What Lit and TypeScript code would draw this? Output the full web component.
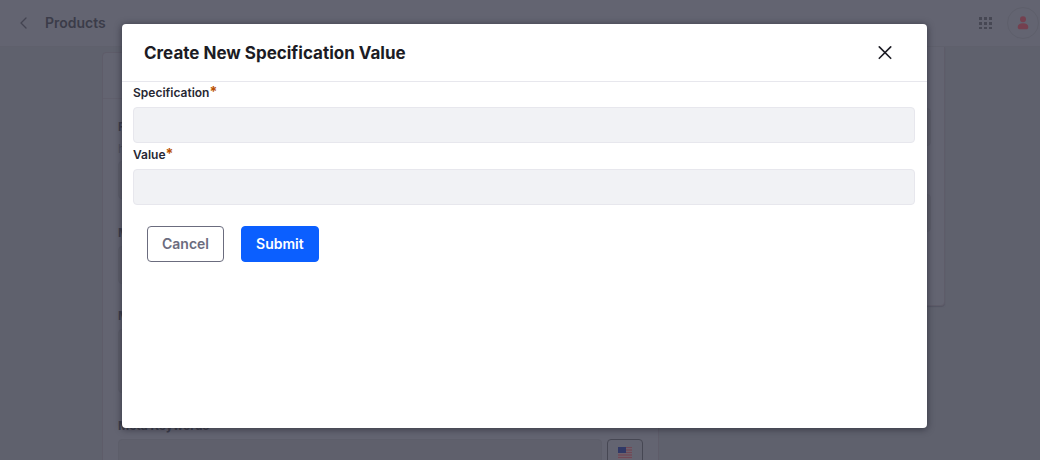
import { LitElement, html, css } from "lit";
import { customElement } from "lit/decorators.js";

@customElement("app-root")
export class AppRoot extends LitElement {
  static styles = css`
    :host {
      display: block;
      font-family: Inter, "Liberation Sans", sans-serif;
      color: #272833;
    }
    * {
      box-sizing: border-box;
    }
    .page {
      height: 100vh;
      overflow: hidden;
      background: #5f616d;
      color: #393a47;
      font-size: 12px;
      line-height: 20px;
    }
    .topbar {
      display: flex;
      align-items: center;
      height: 47px;
      padding: 0 1px 0 18px;
      background: #636471;
      border-bottom: 1px solid #5f606c;
    }
    .back {
      display: flex;
      width: 12px;
      margin-right: 15px;
      color: #434451;
    }
    .crumb {
      flex: 1;
      margin: 0;
      font-size: 14px;
      font-weight: 600;
      line-height: 20px;
      color: #3b3c49;
    }
    .apps {
      display: flex;
      padding: 0;
      border: 0;
      background: none;
      color: #464753;
      margin-right: 15px;
    }
    .avatar {
      display: flex;
      align-items: center;
      justify-content: center;
      width: 32px;
      height: 32px;
      padding: 0;
      border: 1px solid #5e5f6b;
      border-radius: 50%;
      background: none;
      color: #74404f;
    }
    .columns {
      display: grid;
      grid-template-columns: 2fr 1fr;
      align-items: start;
      gap: 8px;
      padding: 0 95px 0 102px;
    }
    .card {
      background: #636471;
      border: 1px solid #5e5c69;
      border-radius: 4px;
    }
    .seo {
      margin-top: 5px;
    }
    .card-head {
      height: 46px;
      border-bottom: 1px solid #605f6c;
    }
    .card-body {
      padding: 18px 15px;
    }
    .card label {
      display: block;
      font-weight: 700;
    }
    .hint {
      margin: 2px 0;
      color: #4d4e5a;
    }
    .box {
      display: block;
      width: 100%;
      height: 38px;
      border: 1px solid #5d5e6a;
      border-radius: 4px;
      background: #5f606c;
      resize: none;
    }
    .stack {
      display: grid;
      gap: 3px;
    }
    .friendly {
      margin-bottom: 24px;
    }
    .meta-title {
      margin-bottom: 22px;
    }
    .meta-description {
      margin-bottom: 23px;
    }
    .tall {
      height: 64px;
    }
    .localized {
      display: flex;
      gap: 5px;
    }
    .flag {
      flex: none;
      display: flex;
      align-items: center;
      justify-content: center;
      width: 36px;
      height: 28px;
      padding: 0;
      border: 1px solid #464753;
      border-radius: 4px;
      background: none;
    }
    .publish {
      border-top: 0;
      border-radius: 0 0 4px 4px;
      padding: 61px 13px 73px;
      box-shadow: 0 1px 1px #545562;
      display: grid;
      gap: 48px;
    }
    .overlay {
      position: absolute;
      inset: 0;
      display: flex;
      padding: 24px 113px 32px 122px;
    }
    .modal {
      flex: 1;
      background: #fff;
      border-radius: 4px;
      box-shadow: 0 1px 6px 1px rgba(39, 40, 51, 0.6);
    }
    .modal-head {
      display: flex;
      align-items: center;
      justify-content: space-between;
      height: 58px;
      padding: 0 26px 0 22px;
      border-bottom: 1px solid #e7e7ed;
    }
    .modal-head h1 {
      margin: 0;
      font-size: 17px;
      font-weight: 700;
      line-height: 24px;
      color: #1c1c24;
    }
    .close {
      display: flex;
      align-items: center;
      justify-content: center;
      width: 32px;
      height: 32px;
      padding: 0;
      border: 0;
      background: none;
      color: #1c1c24;
    }
    form {
      padding: 1px 12px 0 11px;
    }
    .field {
      display: flex;
      flex-direction: column;
      gap: 4px;
      margin-bottom: 2px;
    }
    .field label {
      display: flex;
      font-size: 12px;
      font-weight: 600;
      line-height: 20px;
      height: 20px;
    }
    .star {
      color: #b95000;
      font-size: 14px;
      font-weight: 700;
      line-height: 18px;
    }
    .field input {
      width: 100%;
      height: 36px;
      padding: 0 12px;
      border: 1px solid #e7e7ed;
      border-radius: 4px;
      background: #f1f2f5;
      font: inherit;
    }
    .actions {
      display: flex;
      gap: 17px;
      padding: 19px 14px;
    }
    .btn {
      height: 36px;
      padding: 0 14px;
      border: 1px solid #6b6c7e;
      border-radius: 4px;
      background: #fff;
      color: #6b6c7e;
      font-family: inherit;
      font-size: 14px;
      font-weight: 600;
      line-height: 20px;
    }
    .primary {
      border-color: #0b5fff;
      background: #0b5fff;
      color: #fff;
    }
  `;

  render() {
    return html`
      <div class="page">
        <header class="topbar">
          <a class="back" href="#" aria-label="Back">
            <svg width="12" height="14" viewBox="0 0 12 14" fill="none" stroke="currentColor" stroke-width="1.3" stroke-linecap="round" stroke-linejoin="round">
              <path d="M8 2 3 7l5 5" />
            </svg>
          </a>
          <p class="crumb">Products</p>
          <button class="apps" type="button" aria-label="Applications">
            <svg width="13" height="13" viewBox="0 0 13 13" fill="currentColor">
              <path d="M0 0h3v3H0zM5 0h3v3H5zM10 0h3v3h-3zM0 5h3v3H0zM5 5h3v3H5zM10 5h3v3h-3zM0 10h3v2H0zM5 10h3v2H5zM10 10h3v2h-3z" />
            </svg>
          </button>
          <button class="avatar" type="button" aria-label="User">
            <svg width="12" height="14" viewBox="0 0 12 14" fill="currentColor">
              <circle cx="6" cy="3.2" r="3" />
              <path d="M.7 11C.7 8.6 2.7 7.2 6 7.2s5.3 1.4 5.3 3.8c0 1.5-.8 2.3-2.3 2.3H3C1.5 13.3.7 12.5.7 11z" />
            </svg>
          </button>
        </header>
        <div class="columns">
          <section class="card seo">
            <div class="card-head"></div>
            <div class="card-body">
              <div class="friendly">
                <label for="url">Friendly URL</label>
                <p class="hint">http</p>
                <input id="url" class="box" />
              </div>
              <div class="stack meta-title">
                <label for="title">Meta Title</label>
                <input id="title" class="box" />
              </div>
              <div class="stack meta-description">
                <label for="description">Meta Description</label>
                <textarea id="description" class="box tall"></textarea>
              </div>
              <div class="stack">
                <label for="keywords">Meta Keywords</label>
                <div class="localized">
                  <textarea id="keywords" class="box tall"></textarea>
                  <button class="flag" type="button" aria-label="English">
                    <svg width="14" height="12" viewBox="0 0 14 12">
                      <rect width="14" height="12" fill="#6c6874" />
                      <path d="M0 .5h14M0 3h14M0 5.5h14M0 8h14M0 10.5h14" stroke="#704856" stroke-width="1.3" />
                      <rect width="8" height="6" fill="#303866" />
                    </svg>
                  </button>
                </div>
              </div>
            </div>
          </section>
          <section class="card publish">
            <input class="box" aria-label="Display date" />
            <input class="box" aria-label="Expiration date" />
          </section>
        </div>
      </div>
      <div class="overlay">
        <div class="modal" role="dialog" aria-modal="true" aria-labelledby="heading">
          <header class="modal-head">
            <h1 id="heading">Create New Specification Value</h1>
            <button class="close" type="button" aria-label="Close">
              <svg width="14" height="14" viewBox="0 0 14 14" fill="none" stroke="currentColor" stroke-width="1.6" stroke-linecap="round">
                <path d="M1.300 .9l11.400 11.400M12.700 .9 1.300 12.300" />
              </svg>
            </button>
          </header>
          <form @submit=${(e: Event) => e.preventDefault()}>
            <div class="field">
              <label for="spec">Specification<span class="star">*</span></label>
              <input id="spec" type="text" />
            </div>
            <div class="field">
              <label for="value">Value<span class="star">*</span></label>
              <input id="value" type="text" />
            </div>
            <div class="actions">
              <button class="btn" type="button">Cancel</button>
              <button class="btn primary" type="submit">Submit</button>
            </div>
          </form>
        </div>
      </div>
    `;
  }
}
